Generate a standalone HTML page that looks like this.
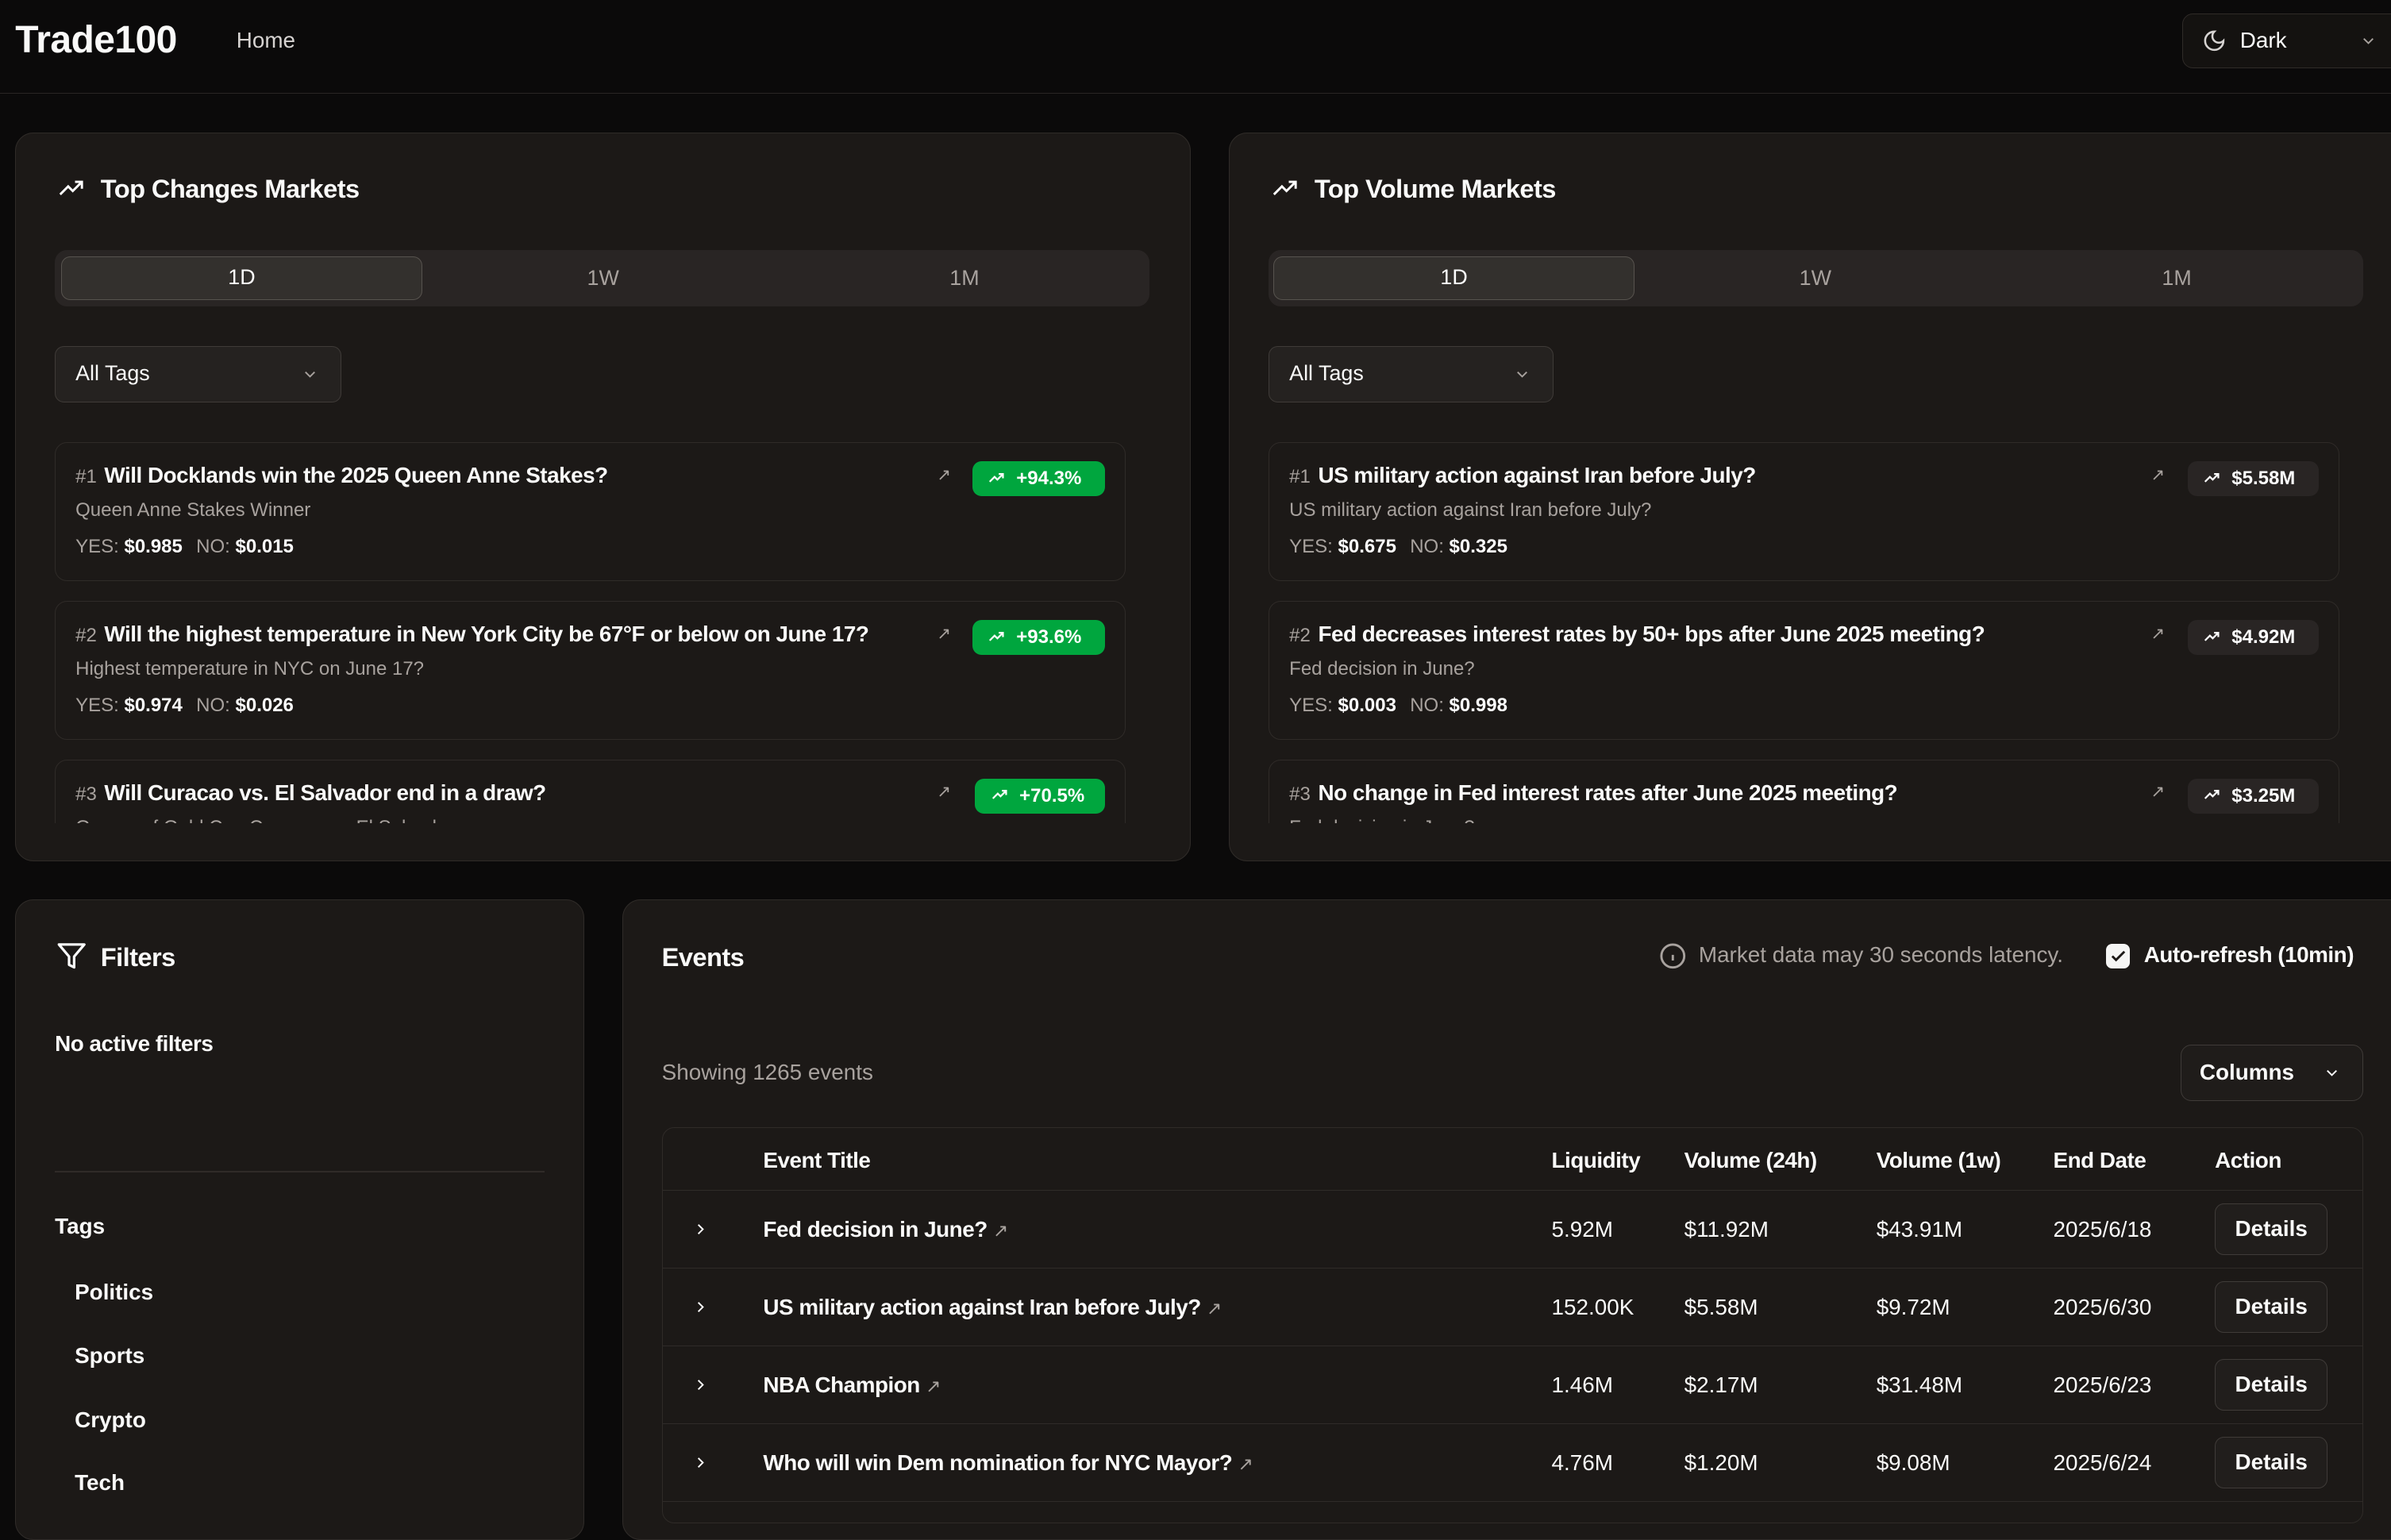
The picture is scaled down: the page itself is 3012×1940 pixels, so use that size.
<!DOCTYPE html>
<html><head><meta charset="utf-8">
<style>
html{zoom:1.9209;}
body{margin:0;width:1568px;height:989px;overflow:hidden;background:#0b0a0a;font-family:"Liberation Sans",sans-serif;color:#fafaf9;position:relative;}
.abs{position:absolute;}
.hdr{left:0;top:0;width:1568px;height:61px;border-bottom:1px solid #292524;}
.card{background:#1c1917;border:1px solid #2f2b28;border-radius:12px;box-sizing:border-box;}
.ttl{font-size:17px;font-weight:bold;letter-spacing:-0.3px;}
.tabs{background:#292524;border-radius:8px;height:37px;}
.tab{position:absolute;top:4px;height:29px;line-height:29px;text-align:center;font-size:14px;color:#a8a29e;border-radius:6px;}
.tab.on{background:#33302d;border:1px solid #57534e;color:#fff;box-sizing:border-box;line-height:27px;}
.sel{border:1px solid #3f3b38;background:#252220;border-radius:6px;height:37px;box-sizing:border-box;font-size:14px;line-height:35px;padding-left:13px;}
.item{border:1px solid #2f2b28;border-radius:8px;box-sizing:border-box;height:91px;}
.it1{position:absolute;left:13px;top:13px;font-size:14.5px;font-weight:bold;white-space:nowrap;letter-spacing:-0.25px;}
.it1 span{color:#a8a29e;font-weight:normal;font-size:12.5px;margin-right:5px;letter-spacing:0;}
.it2{position:absolute;left:13px;top:37px;font-size:12.5px;color:#a8a29e;white-space:nowrap;}
.it3{position:absolute;left:13px;top:61px;font-size:12.5px;color:#a8a29e;white-space:nowrap;}
.it3 b{color:#fff;margin-right:9px;}
.badge{position:absolute;top:12px;height:23px;border-radius:6px;font-size:12.5px;font-weight:bold;line-height:23px;color:#fff;}
.badge svg{vertical-align:-1px;margin:0 7px 0 10px;}
.g{background:#00a63e;}
.v{background:#292524;}
.ext{position:absolute;top:14px;font-size:11px;color:#a8a29e;}
.tbl{font-size:14.5px;}
.row{position:absolute;left:0;width:1116px;height:51px;border-top:1px solid #2f2b28;}
.c{position:absolute;top:17px;white-space:nowrap;}
.det{position:absolute;left:1018px;top:8px;width:74px;height:34px;border:1px solid #3f3b38;background:#211e1c;border-radius:6px;box-sizing:border-box;text-align:center;line-height:32px;font-weight:bold;}
.tg{position:absolute;left:49px;font-size:14.5px;font-weight:bold;}
.b{letter-spacing:-0.25px;}
</style></head><body>
<div class="abs hdr"></div>
<div class="abs" style="left:10px;top:12px;font-size:25px;font-weight:bold;letter-spacing:-0.3px">Trade100</div>
<div class="abs" style="left:155px;top:18px;font-size:14.5px;color:#d6d3d1">Home</div>
<div class="abs" style="left:1431px;top:9px;width:150px;height:36px;border:1px solid #2f2b28;border-radius:7px;background:#141210;box-sizing:border-box"></div>
<svg class="abs" style="left:1444px;top:19px" width="16" height="16" viewBox="0 0 24 24" fill="none" stroke="#d6d3d1" stroke-width="2"><path d="M12 3a6 6 0 0 0 9 9 9 9 0 1 1-9-9Z"/></svg>
<div class="abs" style="left:1469px;top:18px;font-size:14.5px">Dark</div>
<svg class="abs" style="left:1547px;top:21px" width="12" height="12" viewBox="0 0 24 24" fill="none" stroke="#a8a29e" stroke-width="2"><path d="M6 9l6 6 6-6"/></svg>

<!-- card 1 -->
<div class="abs card" style="left:10px;top:87px;width:771px;height:478px"></div>
<svg class="abs" style="left:37px;top:114px" width="20" height="18" viewBox="0 0 24 24" fill="none" stroke="#fff" stroke-width="2"><path d="M2 18l7-7 4 4 8-8M15 7h6v6"/></svg>
<div class="abs ttl" style="left:66px;top:114px">Top Changes Markets</div>
<div class="abs tabs" style="left:36px;top:164px;width:718px">
 <div class="tab on" style="left:4px;width:237px">1D</div>
 <div class="tab" style="left:241px;width:237px">1W</div>
 <div class="tab" style="left:478px;width:237px">1M</div>
</div>
<div class="abs sel" style="left:36px;top:227px;width:188px">All Tags<svg style="position:absolute;right:14px;top:12px" width="12" height="12" viewBox="0 0 24 24" fill="none" stroke="#a8a29e" stroke-width="2"><path d="M6 9l6 6 6-6"/></svg></div>
<div class="abs" style="left:36px;top:290px;width:702px;height:250px;overflow:hidden">
 <div class="abs item" style="left:0;top:0;width:702px">
  <div class="it1"><span>#1</span>Will Docklands win the 2025 Queen Anne Stakes?</div>
  <div class="it2">Queen Anne Stakes Winner</div>
  <div class="it3">YES: <b>$0.985</b>NO: <b>$0.015</b></div>
  <div class="ext" style="left:578px">&#8599;</div>
  <div class="badge g" style="left:601px;width:87px"><svg width="12" height="11" viewBox="0 0 24 24" fill="none" stroke="#fff" stroke-width="2.5"><path d="M2 18l7-7 4 4 8-8M15 7h6v6"/></svg>+94.3%</div>
 </div>
 <div class="abs item" style="left:0;top:104px;width:702px">
  <div class="it1"><span>#2</span>Will the highest temperature in New York City be 67°F or below on June 17?</div>
  <div class="it2">Highest temperature in NYC on June 17?</div>
  <div class="it3">YES: <b>$0.974</b>NO: <b>$0.026</b></div>
  <div class="ext" style="left:578px">&#8599;</div>
  <div class="badge g" style="left:601px;width:87px"><svg width="12" height="11" viewBox="0 0 24 24" fill="none" stroke="#fff" stroke-width="2.5"><path d="M2 18l7-7 4 4 8-8M15 7h6v6"/></svg>+93.6%</div>
 </div>
 <div class="abs item" style="left:0;top:208px;width:702px">
  <div class="it1"><span>#3</span>Will Curacao vs. El Salvador end in a draw?</div>
  <div class="it2">Games of Gold Cup Curacao vs. El Salvador</div>
  <div class="ext" style="left:578px">&#8599;</div>
  <div class="badge g" style="left:603px;width:85px"><svg width="12" height="11" viewBox="0 0 24 24" fill="none" stroke="#fff" stroke-width="2.5"><path d="M2 18l7-7 4 4 8-8M15 7h6v6"/></svg>+70.5%</div>
 </div>
</div>

<!-- card 2 -->
<div class="abs card" style="left:806px;top:87px;width:780px;height:478px"></div>
<svg class="abs" style="left:833px;top:114px" width="20" height="18" viewBox="0 0 24 24" fill="none" stroke="#fff" stroke-width="2"><path d="M2 18l7-7 4 4 8-8M15 7h6v6"/></svg>
<div class="abs ttl" style="left:862px;top:114px">Top Volume Markets</div>
<div class="abs tabs" style="left:832px;top:164px;width:718px">
 <div class="tab on" style="left:3px;width:237px">1D</div>
 <div class="tab" style="left:240px;width:237px">1W</div>
 <div class="tab" style="left:477px;width:237px">1M</div>
</div>
<div class="abs sel" style="left:832px;top:227px;width:187px">All Tags<svg style="position:absolute;right:14px;top:12px" width="12" height="12" viewBox="0 0 24 24" fill="none" stroke="#a8a29e" stroke-width="2"><path d="M6 9l6 6 6-6"/></svg></div>
<div class="abs" style="left:832px;top:290px;width:702px;height:250px;overflow:hidden">
 <div class="abs item" style="left:0;top:0;width:702px">
  <div class="it1"><span>#1</span>US military action against Iran before July?</div>
  <div class="it2">US military action against Iran before July?</div>
  <div class="it3">YES: <b>$0.675</b>NO: <b>$0.325</b></div>
  <div class="ext" style="left:578px">&#8599;</div>
  <div class="badge v" style="left:602px;width:86px"><svg width="12" height="11" viewBox="0 0 24 24" fill="none" stroke="#fff" stroke-width="2.5"><path d="M2 18l7-7 4 4 8-8M15 7h6v6"/></svg>$5.58M</div>
 </div>
 <div class="abs item" style="left:0;top:104px;width:702px">
  <div class="it1"><span>#2</span>Fed decreases interest rates by 50+ bps after June 2025 meeting?</div>
  <div class="it2">Fed decision in June?</div>
  <div class="it3">YES: <b>$0.003</b>NO: <b>$0.998</b></div>
  <div class="ext" style="left:578px">&#8599;</div>
  <div class="badge v" style="left:602px;width:86px"><svg width="12" height="11" viewBox="0 0 24 24" fill="none" stroke="#fff" stroke-width="2.5"><path d="M2 18l7-7 4 4 8-8M15 7h6v6"/></svg>$4.92M</div>
 </div>
 <div class="abs item" style="left:0;top:208px;width:702px">
  <div class="it1"><span>#3</span>No change in Fed interest rates after June 2025 meeting?</div>
  <div class="it2">Fed decision in June?</div>
  <div class="ext" style="left:578px">&#8599;</div>
  <div class="badge v" style="left:602px;width:86px"><svg width="12" height="11" viewBox="0 0 24 24" fill="none" stroke="#fff" stroke-width="2.5"><path d="M2 18l7-7 4 4 8-8M15 7h6v6"/></svg>$3.25M</div>
 </div>
</div>

<!-- filters -->
<div class="abs card" style="left:10px;top:590px;width:373px;height:420px"></div>
<svg class="abs" style="left:37px;top:617px" width="20" height="20" viewBox="0 0 24 24" fill="none" stroke="#fff" stroke-width="2" stroke-linejoin="round"><path d="M22 3H2l8 9.5V19l4 2v-8.5Z"/></svg>
<div class="abs ttl" style="left:66px;top:618px">Filters</div>
<div class="abs b" style="left:36px;top:676px;font-size:14.5px;font-weight:bold">No active filters</div>
<div class="abs" style="left:36px;top:768px;width:321px;height:1px;background:#2f2b28"></div>
<div class="abs" style="left:36px;top:796px;font-size:14.5px;font-weight:bold">Tags</div>
<div class="tg" style="top:839px">Politics</div>
<div class="tg" style="top:881px">Sports</div>
<div class="tg" style="top:923px">Crypto</div>
<div class="tg" style="top:964px">Tech</div>

<!-- events -->
<div class="abs card" style="left:408px;top:590px;width:1180px;height:420px"></div>
<div class="abs ttl" style="left:434px;top:618px">Events</div>
<svg class="abs" style="left:1088px;top:618px" width="18" height="18" viewBox="0 0 24 24" fill="none" stroke="#a8a29e" stroke-width="2"><circle cx="12" cy="12" r="10"/><path d="M12 16v-5M12 8h.01"/></svg>
<div class="abs" style="left:1114px;top:618px;font-size:14.5px;color:#a8a29e">Market data may 30 seconds latency.</div>
<div class="abs" style="left:1381px;top:619px;width:16px;height:16px;background:#f5f5f4;border-radius:4px"></div>
<svg class="abs" style="left:1383px;top:621px" width="12" height="12" viewBox="0 0 24 24" fill="none" stroke="#1c1917" stroke-width="3"><path d="M4 12l5 5L20 6"/></svg>
<div class="abs b" style="left:1406px;top:618px;font-size:14.5px;font-weight:bold">Auto-refresh (10min)</div>
<div class="abs" style="left:434px;top:695px;font-size:14.5px;color:#a8a29e">Showing 1265 events</div>
<div class="abs" style="left:1430px;top:685px;width:120px;height:37px;border:1px solid #3f3b38;border-radius:7px;background:#1f1c1a;box-sizing:border-box;font-size:14.5px;font-weight:bold;line-height:35px;padding-left:12px">Columns<svg style="position:absolute;right:14px;top:12px" width="12" height="12" viewBox="0 0 24 24" fill="none" stroke="#fff" stroke-width="2"><path d="M6 9l6 6 6-6"/></svg></div>
<div class="abs tbl" style="left:434px;top:739px;width:1116px;height:260px;border:1px solid #2f2b28;border-radius:8px;box-sizing:border-box;overflow:hidden">
 <div class="c b" style="left:66px;top:13px;font-weight:bold">Event Title</div>
 <div class="c b" style="left:583px;top:13px;font-weight:bold">Liquidity</div>
 <div class="c b" style="left:670px;top:13px;font-weight:bold">Volume (24h)</div>
 <div class="c b" style="left:796px;top:13px;font-weight:bold">Volume (1w)</div>
 <div class="c b" style="left:912px;top:13px;font-weight:bold">End Date</div>
 <div class="c b" style="left:1018px;top:13px;font-weight:bold">Action</div>
 <div class="row" style="top:41px"><svg class="c" style="left:19px;top:19px" width="12" height="12" viewBox="0 0 24 24" fill="none" stroke="#fff" stroke-width="2"><path d="M9 6l6 6-6 6"/></svg><div class="c b" style="left:66px;font-weight:bold">Fed decision in June? <span style="color:#a8a29e;font-weight:normal;font-size:12px">&#8599;</span></div><div class="c" style="left:583px">5.92M</div><div class="c" style="left:670px">$11.92M</div><div class="c" style="left:796px">$43.91M</div><div class="c" style="left:912px">2025/6/18</div><div class="det">Details</div></div>
 <div class="row" style="top:92px"><svg class="c" style="left:19px;top:19px" width="12" height="12" viewBox="0 0 24 24" fill="none" stroke="#fff" stroke-width="2"><path d="M9 6l6 6-6 6"/></svg><div class="c b" style="left:66px;font-weight:bold">US military action against Iran before July? <span style="color:#a8a29e;font-weight:normal;font-size:12px">&#8599;</span></div><div class="c" style="left:583px">152.00K</div><div class="c" style="left:670px">$5.58M</div><div class="c" style="left:796px">$9.72M</div><div class="c" style="left:912px">2025/6/30</div><div class="det">Details</div></div>
 <div class="row" style="top:143px"><svg class="c" style="left:19px;top:19px" width="12" height="12" viewBox="0 0 24 24" fill="none" stroke="#fff" stroke-width="2"><path d="M9 6l6 6-6 6"/></svg><div class="c b" style="left:66px;font-weight:bold">NBA Champion <span style="color:#a8a29e;font-weight:normal;font-size:12px">&#8599;</span></div><div class="c" style="left:583px">1.46M</div><div class="c" style="left:670px">$2.17M</div><div class="c" style="left:796px">$31.48M</div><div class="c" style="left:912px">2025/6/23</div><div class="det">Details</div></div>
 <div class="row" style="top:194px"><svg class="c" style="left:19px;top:19px" width="12" height="12" viewBox="0 0 24 24" fill="none" stroke="#fff" stroke-width="2"><path d="M9 6l6 6-6 6"/></svg><div class="c b" style="left:66px;font-weight:bold">Who will win Dem nomination for NYC Mayor? <span style="color:#a8a29e;font-weight:normal;font-size:12px">&#8599;</span></div><div class="c" style="left:583px">4.76M</div><div class="c" style="left:670px">$1.20M</div><div class="c" style="left:796px">$9.08M</div><div class="c" style="left:912px">2025/6/24</div><div class="det">Details</div></div>
 <div class="row" style="top:245px"></div>
</div>
</body></html>
